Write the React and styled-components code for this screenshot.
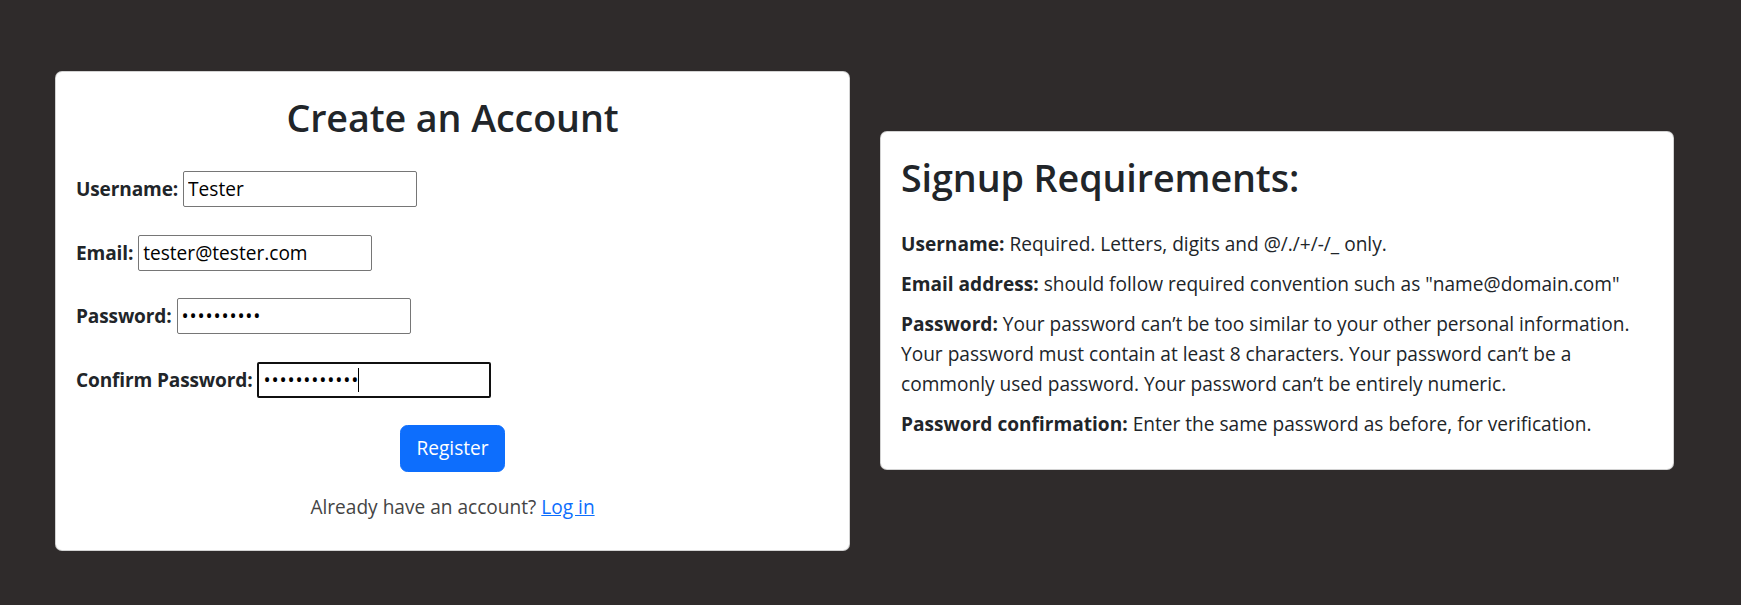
import React from "react";
import styled, { createGlobalStyle } from "styled-components";

const GlobalStyle = createGlobalStyle`
  html, body {
    margin: 0;
    padding: 0;
    background-color: #2f2b2b;
  }
  body {
    font-family: "Open Sans", "Noto Sans", sans-serif;
    font-size: 19.1px;
    line-height: 30px;
    color: #212529;
  }
`;

const Page = styled.div`
  display: flex;
  align-items: flex-start;
  gap: 30px;
  padding: 71px 0 0 55px;
  min-height: 605px;
  box-sizing: border-box;
`;

const Card = styled.div`
  box-sizing: border-box;
  width: ${(p) => p.width}px;
  margin-top: ${(p) => p.offset || 0}px;
  padding: 20px;
  background-color: #fff;
  border: 1px solid rgba(0, 0, 0, 0.175);
  border-radius: 7px;
`;

const Title = styled.h2`
  margin: 1.5px 0 ${(p) => p.gap}px;
  font-size: 37.7px;
  font-weight: 600;
  line-height: 48px;
  letter-spacing: -0.1px;
  text-align: ${(p) => p.align || "left"};
`;

const Form = styled.form`
  display: flex;
  flex-direction: column;
  align-items: flex-start;
`;

const FieldRow = styled.div`
  display: flex;
  align-items: baseline;
  gap: 5px;
  margin-bottom: 27.5px;
`;

const Label = styled.label`
  font-weight: 700;
  letter-spacing: -0.15px;
`;

const InputWrap = styled.span`
  position: relative;
  display: inline-flex;
`;

const Input = styled.input`
  box-sizing: border-box;
  width: 234px;
  height: 36px;
  padding: 1px 4px;
  font-family: inherit;
  font-size: 19.1px;
  line-height: 30px;
  letter-spacing: ${(p) => (p.type === "password" ? "0.8px" : "0")};
  color: #000;
  background: #fff;
  border: ${(p) => (p.focused ? "2px solid #101010" : "1px solid #767676")};
  border-radius: 2px;
  outline: none;
`;

const Caret = styled.span`
  position: absolute;
  left: ${(p) => p.left}px;
  top: 6px;
  width: 1px;
  height: 24px;
  background: #000;
`;

const ButtonRow = styled.div`
  align-self: stretch;
  display: flex;
  justify-content: center;
  margin-top: -0.5px;
`;

const Button = styled.button`
  height: 47px;
  padding: 7.5px 15px;
  font-family: inherit;
  font-size: 19.1px;
  line-height: 30px;
  color: #fff;
  background-color: #0d6efd;
  border: 1px solid #0d6efd;
  border-radius: 7.5px;
  cursor: pointer;
`;

const Footnote = styled.p`
  margin: 20px 0 8px;
  text-align: center;
  color: #444;
`;

const Link = styled.a`
  color: #0d6efd;
  text-decoration: underline;
`;

const Rule = styled.p`
  margin: 0 0 10px;
  & strong {
    font-weight: 700;
  }
`;

const fields = [
  { id: "username", label: "Username:", type: "text", value: "Tester" },
  { id: "email", label: "Email:", type: "email", value: "tester@tester.com" },
  { id: "password1", label: "Password:", type: "password", value: "••••••••••" },
  {
    id: "password2",
    label: "Confirm Password:",
    type: "password",
    value: "••••••••••••",
    focused: true,
  },
];

const rules = [
  ["Username:", "Required. Letters, digits and @/./+/-/_ only."],
  ["Email address:", 'should follow required convention such as "name@domain.com"'],
  [
    "Password:",
    "Your password can’t be too similar to your other personal information. Your password must contain at least 8 characters. Your password can’t be a commonly used password. Your password can’t be entirely numeric.",
  ],
  ["Password confirmation:", "Enter the same password as before, for verification."],
];

export default function App() {
  return (
    <>
      <GlobalStyle />
      <Page>
        <Card width={795}>
          <Title align="center" gap={29.5}>
            Create an Account
          </Title>
          <Form onSubmit={(e) => e.preventDefault()}>
            {fields.map((f) => (
              <FieldRow key={f.id}>
                <Label htmlFor={f.id}>{f.label}</Label>
                <InputWrap>
                  <Input
                    id={f.id}
                    type={f.type}
                    defaultValue={f.value}
                    focused={f.focused}
                    readOnly
                  />
                  {f.focused && <Caret left={101} />}
                </InputWrap>
              </FieldRow>
            ))}
            <ButtonRow>
              <Button type="submit">Register</Button>
            </ButtonRow>
          </Form>
          <Footnote>
            Already have an account? <Link href="#">Log in</Link>
          </Footnote>
        </Card>
        <Card width={794} offset={60}>
          <Title gap={27.5}>Signup Requirements:</Title>
          {rules.map(([k, v]) => (
            <Rule key={k}>
              <strong>{k}</strong> {v}
            </Rule>
          ))}
        </Card>
      </Page>
    </>
  );
}
